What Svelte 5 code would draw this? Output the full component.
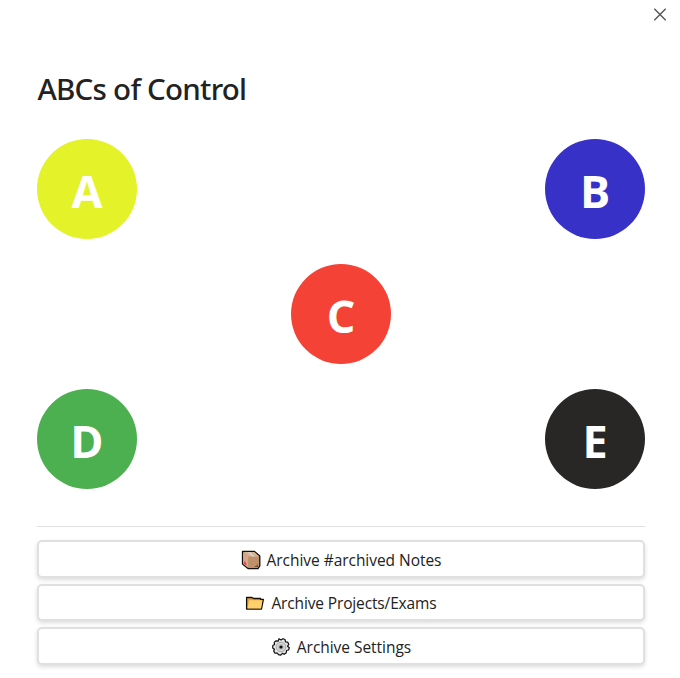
<script>
  const circles = ['A', 'B', 'C', 'D', 'E'];
  const actions = [
    { icon: 'box', label: 'Archive #archived Notes' },
    { icon: 'folder', label: 'Archive Projects/Exams' },
    { icon: 'gear', label: 'Archive Settings' }
  ];
</script>

<main class="modal">
  <button class="close" aria-label="Close">
    <svg width="14" height="14" viewBox="0 0 14 14"><path d="M1.3 1.8 12.7 13.2M12.7 1.8 1.3 13.2" /></svg>
  </button>
  <h1><span>ABCs of Control</span></h1>
  <div class="grid">
    {#each circles as c}
      <button class="circle {c.toLowerCase()}"><span>{c}</span></button>
    {/each}
  </div>
  <hr />
  <div class="actions">
    {#each actions as action}
      <button class="action {action.icon}">
        {#if action.icon === 'box'}
          <svg width="20" height="20" viewBox="0 0 20 20">
            <path d="M1.5 1.5H13.5L18.8 6V16L17 18.6H7L1.5 14Z" fill="#be916c" stroke="#111" stroke-width="1.3" stroke-linejoin="round" />
            <path d="M2.2 2.1H13.3L18.1 6.4H7.2Z" fill="#d9b08e" />
            <path d="M2.1 2.5 7.1 6.6V17.8L2.1 13.7Z" fill="#dba58c" />
            <path d="M6.5 2.1H9.3L14 6.4H11Z" fill="#d5d0cb" />
            <path d="M3 11.2 5.2 13V15.4L3 13.6Z" fill="#ed3443" />
            <path d="M14 16.5H17M15.5 15.2H17" stroke="#6e4935" />
          </svg>
        {:else if action.icon === 'folder'}
          <svg width="20" height="20" viewBox="0 0 20 20">
            <path d="M1.6 16V4.5H7L8.5 5.5H15.5V6.3H18.4L16.5 16H1.6Z" fill="#e5a334" stroke="#111" stroke-width="1.3" stroke-linejoin="round" />
            <path d="M4 7.2H17.4L16 15.4H2.5Z" fill="#ffd06d" />
          </svg>
        {:else}
          <svg width="20" height="20" viewBox="0 0 20 20">
            <path d="M8 1.7 10 3 12 1.7 14 2.5 14.5 4.8 16.8 5.2 17.8 7.4 16.6 9.2 18.3 10.8 17.6 13 15.5 13.5 15.3 15.8 13.2 17.3 11.4 16.4 9.8 18.2 7.4 17.6 6.3 16 4 16.1 2.7 14.1 3.5 12.3 1.7 11 1.8 8.6 3.6 7.6 3.2 5.4 5 3.8 7.1 4.2Z" fill="#e6e6e6" stroke="#111" stroke-width="1.2" stroke-linejoin="round" />
            <circle cx="10" cy="10" r="4.8" fill="#d6d6d6" stroke="#999" stroke-width=".8" />
            <circle cx="10" cy="10" r="2.8" fill="#bbb" />
            <circle cx="10" cy="10" r="1.6" fill="#111" />
          </svg>
        {/if}
        <span>{action.label}</span>
      </button>
    {/each}
  </div>
</main>

<style>
  :global(body) { margin: 0; background: #fff; }
  .modal {
    position: relative;
    box-sizing: border-box;
    width: 680px;
    height: 678px;
    padding: 68px 35px 0 37px;
    overflow: hidden;
    color: #222;
    font-family: "Open Sans", "Noto Sans", sans-serif;
  }
  button { margin: 0; padding: 0; border: 0; font-family: inherit; color: inherit; }
  .close { position: absolute; top: 7px; right: 13px; width: 14px; height: 14px; background: none; }
  .close svg { display: block; }
  .close path { fill: none; stroke: #555; stroke-width: 1.4; }
  h1 {
    margin: 0 0 29px;
    padding-left: 0.5px;
    height: 42px;
    line-height: 42px;
    font-family: "Noto Sans", "Open Sans", sans-serif;
    font-size: 29.5px;
    font-weight: 500;
    letter-spacing: -0.75px;
    white-space: nowrap;
  }
  .grid {
    display: grid;
    grid-template-columns: 100px 1fr 100px;
    grid-template-rows: repeat(3, 100px);
    row-gap: 25px;
    justify-items: center;
  }
  .circle {
    width: 100px;
    height: 100px;
    padding-top: 4px;
    border-radius: 50%;
    color: #fff;
    font-size: 45px;
    font-weight: 700;
    line-height: 60px;
  }
  .circle.a { grid-area: 1 / 1; background: #e3f229; }
  .circle.b { grid-area: 1 / 3; background: #3731c8; }
  .circle.c { grid-area: 2 / 2; background: #f44336; }
  .circle.d { grid-area: 3 / 1; background: #4caf50; }
  .circle.e { grid-area: 3 / 3; background: #282725; }
  hr { margin: 37px 0 13.25px; border: 0; height: 1px; background: #e0e0e0; }
  .actions { display: flex; flex-direction: column; gap: 6.2px; }
  .action {
    display: flex;
    box-sizing: border-box;
    height: 37.3px;
    align-items: center;
    justify-content: center;
    gap: 6px;
    padding-top: 2px;
    border: 2px solid #e0e0e0;
    border-radius: 5px;
    background: #fff;
    box-shadow: 0 2px 4px rgba(0, 0, 0, 0.14);
    font-size: 15.5px;
    letter-spacing: -0.04px;
    line-height: 22px;
    white-space: nowrap;
  }
  .action.box { padding-top: 3px; }
  .action.folder { padding-top: 1px; letter-spacing: -0.14px; }
  .action svg { flex: none; }
</style>
